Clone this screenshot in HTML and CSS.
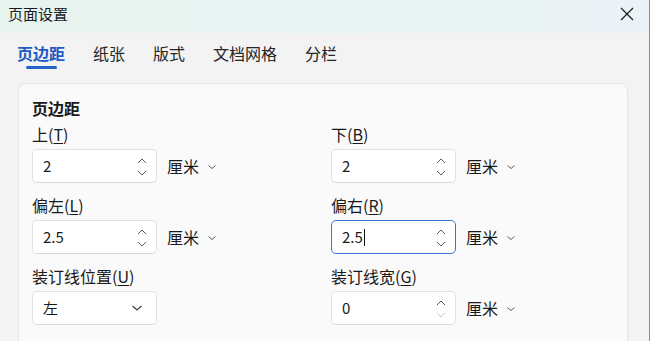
FILE: index.html
```html
<!DOCTYPE html>
<html lang="zh-CN">
<head>
<meta charset="utf-8">
<title>页面设置</title>
<link rel="stylesheet" href="styles.css">
</head>
<body>
<div class="window">
  <div class="titlebar">
    <span class="title">页面设置</span>
    <svg class="close" width="14" height="14" viewBox="0 0 14 14"><path d="M1 1 L13 13 M13 1 L1 13" stroke="#1a1a1a" stroke-width="1.2" fill="none"/></svg>
  </div>
  <div class="tabs">
    <div class="tab active">页边距</div>
    <div class="tab">纸张</div>
    <div class="tab">版式</div>
    <div class="tab">文档网格</div>
    <div class="tab">分栏</div>
  </div>
  <div class="card">
    <div class="section-title">页边距</div>
    <div class="grid">
      <div class="field">
        <div class="label">上(<u>T</u>)</div>
        <div class="row">
          <div class="spin"><span class="val">2</span><span class="arrows"><svg width="10" height="6" viewBox="0 0 10 6"><path d="M1 5 L5 1 L9 5" stroke="#5a5a5a" stroke-width="1" fill="none"/></svg><svg width="10" height="6" viewBox="0 0 10 6"><path d="M1 1 L5 5 L9 1" stroke="#5a5a5a" stroke-width="1" fill="none"/></svg></span></div>
          <div class="unit">厘米<svg width="10" height="6" viewBox="0 0 10 6"><path d="M1.5 1.5 L5 4.5 L8.5 1.5" stroke="#5a5a5a" stroke-width="1" fill="none"/></svg></div>
        </div>
      </div>
      <div class="field">
        <div class="label">下(<u>B</u>)</div>
        <div class="row">
          <div class="spin"><span class="val">2</span><span class="arrows"><svg width="10" height="6" viewBox="0 0 10 6"><path d="M1 5 L5 1 L9 5" stroke="#5a5a5a" stroke-width="1" fill="none"/></svg><svg width="10" height="6" viewBox="0 0 10 6"><path d="M1 1 L5 5 L9 1" stroke="#5a5a5a" stroke-width="1" fill="none"/></svg></span></div>
          <div class="unit">厘米<svg width="10" height="6" viewBox="0 0 10 6"><path d="M1.5 1.5 L5 4.5 L8.5 1.5" stroke="#5a5a5a" stroke-width="1" fill="none"/></svg></div>
        </div>
      </div>
      <div class="field">
        <div class="label">偏左(<u>L</u>)</div>
        <div class="row">
          <div class="spin"><span class="val">2.5</span><span class="arrows"><svg width="10" height="6" viewBox="0 0 10 6"><path d="M1 5 L5 1 L9 5" stroke="#5a5a5a" stroke-width="1" fill="none"/></svg><svg width="10" height="6" viewBox="0 0 10 6"><path d="M1 1 L5 5 L9 1" stroke="#5a5a5a" stroke-width="1" fill="none"/></svg></span></div>
          <div class="unit">厘米<svg width="10" height="6" viewBox="0 0 10 6"><path d="M1.5 1.5 L5 4.5 L8.5 1.5" stroke="#5a5a5a" stroke-width="1" fill="none"/></svg></div>
        </div>
      </div>
      <div class="field">
        <div class="label">偏右(<u>R</u>)</div>
        <div class="row">
          <div class="spin focused"><span class="val">2.5<span class="caret"></span></span><span class="arrows"><svg width="10" height="6" viewBox="0 0 10 6"><path d="M1 5 L5 1 L9 5" stroke="#5a5a5a" stroke-width="1" fill="none"/></svg><svg width="10" height="6" viewBox="0 0 10 6"><path d="M1 1 L5 5 L9 1" stroke="#5a5a5a" stroke-width="1" fill="none"/></svg></span></div>
          <div class="unit">厘米<svg width="10" height="6" viewBox="0 0 10 6"><path d="M1.5 1.5 L5 4.5 L8.5 1.5" stroke="#5a5a5a" stroke-width="1" fill="none"/></svg></div>
        </div>
      </div>
      <div class="field">
        <div class="label">装订线位置(<u>U</u>)</div>
        <div class="row">
          <div class="select"><span class="val">左</span><svg width="12" height="8" viewBox="0 0 12 8"><path d="M1.5 2 L6 6 L10.5 2" stroke="#3a3a3a" stroke-width="1.1" fill="none"/></svg></div>
        </div>
      </div>
      <div class="field">
        <div class="label">装订线宽(<u>G</u>)</div>
        <div class="row">
          <div class="spin"><span class="val">0</span><span class="arrows"><svg width="10" height="6" viewBox="0 0 10 6"><path d="M1 5 L5 1 L9 5" stroke="#5a5a5a" stroke-width="1" fill="none"/></svg><svg width="10" height="6" viewBox="0 0 10 6"><path d="M1 1 L5 5 L9 1" stroke="#c4c4c4" stroke-width="1" fill="none"/></svg></span></div>
          <div class="unit">厘米<svg width="10" height="6" viewBox="0 0 10 6"><path d="M1.5 1.5 L5 4.5 L8.5 1.5" stroke="#5a5a5a" stroke-width="1" fill="none"/></svg></div>
        </div>
      </div>
    </div>
  </div>
</div>
</body>
</html>
```
FILE: styles.css
```css
* { box-sizing: border-box; }
html, body { margin: 0; padding: 0; }
body {
  width: 650px;
  height: 341px;
  overflow: hidden;
  background: #f3f3f3;
  font-family: "Noto Sans CJK SC", "Noto Sans", sans-serif;
  color: #1a1a1a;
}
.window {
  width: 650px;
  height: 341px;
  border-right: 1px solid #8c8c8c;
  background: #f3f3f3;
}
.titlebar {
  height: 33px;
  display: flex;
  align-items: center;
  justify-content: space-between;
  padding: 0 15px 0 8px;
  background: linear-gradient(90deg, #e7f3ee 0%, #e6f3f3 45%, #eaf3f7 100%);
}
.title {
  font-size: 15px;
  line-height: 20px;
  margin-top: -5px;
}
.close { margin-top: -5px; }
.tabs {
  display: flex;
  padding-left: 17px;
  gap: 28px;
  height: 50px;
  padding-top: 9px;
}
.tab {
  position: relative;
  font-size: 16px;
  line-height: 22px;
  color: #262626;
  height: 28px;
}
.tab.active {
  color: #1f5bc4;
  font-weight: 700;
}
.tab.active::after {
  content: "";
  position: absolute;
  left: 9px;
  width: 31px;
  bottom: 1px;
  height: 3px;
  border-radius: 2px;
  background: #2362c8;
}
.card {
  margin-left: 18px;
  width: 610px;
  height: 270px;
  background: #fafafa;
  border: 1px solid #e6e6e6;
  border-radius: 8px;
  padding: 14px 0 0 13px;
}
.section-title {
  font-size: 16px;
  font-weight: 700;
  line-height: 20px;
  height: 20px;
}
.grid {
  display: grid;
  grid-template-columns: 299px 280px;
  row-gap: 12px;
  margin-top: 6px;
}
.field {
  display: flex;
  flex-direction: column;
  gap: 5px;
}
.label {
  font-size: 16px;
  line-height: 20px;
  height: 20px;
}
.label u { text-underline-offset: 2px; text-decoration-thickness: 1px; }
.row {
  display: flex;
  align-items: center;
}
.spin, .select {
  width: 125px;
  height: 34px;
  background: #ffffff;
  border: 1px solid #e1e1e1;
  border-bottom-color: #d6d6d6;
  border-radius: 5px;
  display: flex;
  align-items: center;
  justify-content: space-between;
  padding: 0 9px 0 10px;
}
.spin.focused {
  border-color: #3a74d6;
}
.val {
  font-size: 15px;
  line-height: 20px;
  display: flex;
  align-items: center;
}
.caret {
  display: inline-block;
  width: 1px;
  height: 17px;
  background: #111;
  margin-left: 1px;
}
.arrows {
  display: flex;
  flex-direction: column;
  gap: 6px;
  margin-top: 1px;
}
.arrows svg { display: block; }
.select { padding-right: 13px; }
.unit {
  margin-left: 10px;
  font-size: 16px;
  line-height: 20px;
  display: flex;
  align-items: center;
  gap: 8px;
}
.unit svg { margin-top: 1px; }
```
